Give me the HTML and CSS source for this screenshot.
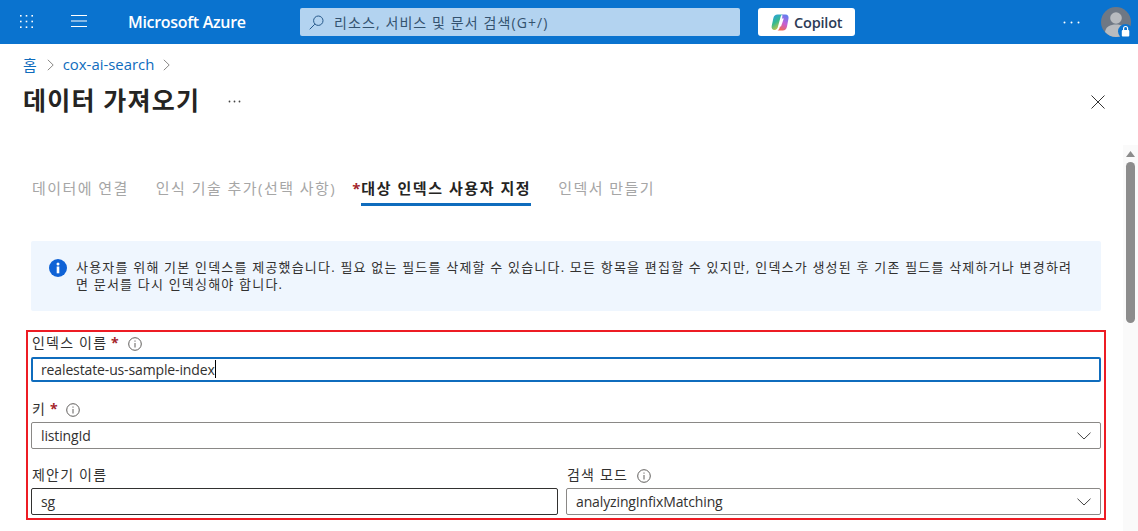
FILE: index.html
```html
<!DOCTYPE html>
<html lang="ko">
<head>
<meta charset="utf-8">
<title>데이터 가져오기</title>
<link rel="stylesheet" href="styles.css">
</head>
<body>
<header class="topbar">
  <button class="top-icon waffle" aria-label="앱">
    <svg width="13" height="13" viewBox="0 0 13 13" fill="#fff"><rect x="0" y="0" width="1.600" height="1.600"/><rect x="5.700" y="0" width="1.600" height="1.600"/><rect x="11.400" y="0" width="1.600" height="1.600"/><rect x="0" y="5.700" width="1.600" height="1.600"/><rect x="5.700" y="5.700" width="1.600" height="1.600"/><rect x="11.400" y="5.700" width="1.600" height="1.600"/><rect x="0" y="11.400" width="1.600" height="1.600"/><rect x="5.700" y="11.400" width="1.600" height="1.600"/><rect x="11.400" y="11.400" width="1.600" height="1.600"/></svg>
  </button>
  <button class="top-icon burger" aria-label="메뉴">
    <svg width="16" height="12" viewBox="0 0 16 12" stroke="#fff" fill="none"><path d="M0 .5h16M0 6h16M0 11.500h16"/></svg>
  </button>
  <div class="brand">Microsoft Azure</div>
  <div class="search">
    <svg width="15" height="15" viewBox="0 0 15 15" fill="none" stroke="#27598a"><circle cx="9.300" cy="5.700" r="4.700"/><path d="M5.800 9.200L.7 14.300"/></svg>
    <span>리소스, 서비스 및 문서 검색(G+/)</span>
  </div>
  <button class="copilot">
    <svg width="18" height="17" viewBox="0 0 18 17">
      <defs>
        <linearGradient id="cpa" x1="0.100" y1="0" x2="0.600" y2="1"><stop offset="0" stop-color="#2a9fe6"/><stop offset=".5" stop-color="#35b98f"/><stop offset="1" stop-color="#e0c83c"/></linearGradient>
        <linearGradient id="cpb" x1="0.700" y1="0" x2="0.300" y2="1"><stop offset="0" stop-color="#5f7ef0"/><stop offset=".5" stop-color="#c45fd6"/><stop offset="1" stop-color="#f4674f"/></linearGradient>
      </defs>
      <path d="M6.500.5h5.500c-1.300.3-2 1.200-2.400 2.500L7 12.500c-.4 2-1.700 3.500-3.500 3.500C1.300 16 .2 14.300.7 12L2.400 4C2.900 1.800 4.300.5 6.500.5z" fill="url(#cpa)"/>
      <path d="M11 .5h3.500c2.300 0 3.500 1.800 3 4L16 12.500c-.5 2.500-2 4-4.200 4H6.200c1.300-.4 2-1.400 2.400-2.800L11 4.500c.3-1.600.7-3.200 0-4z" fill="url(#cpb)"/>
      <path d="M10.600 4.500h2.200L10 12.500H7.800z" fill="#fff"/>
    </svg>
    <span>Copilot</span>
  </button>
  <button class="more-top" aria-label="더 보기">
    <svg width="17" height="3" viewBox="0 0 17 3" fill="#fff"><circle cx="1.500" cy="1.500" r="1"/><circle cx="8.500" cy="1.500" r="1"/><circle cx="15.500" cy="1.500" r="1"/></svg>
  </button>
  <div class="avatar">
    <svg width="30" height="30" viewBox="0 0 30 30">
      <circle cx="15" cy="15" r="15" fill="#6f7884"/>
      <circle cx="15" cy="11" r="5.800" fill="#b8bbbf"/>
      <path d="M4 25c1-5.500 5-7.500 11-7.500S25 19.500 26 25c-2.800 3-6.500 5-11 5S6.800 28 4 25z" fill="#b8bbbf"/>
      <circle cx="24.500" cy="24.500" r="7.500" fill="#0a73cf"/>
      <rect x="20.800" y="23" width="7.500" height="6.500" rx="1" fill="#fff"/>
      <path d="M22.600 23v-1.500a2 2 0 0 1 4 0V23" fill="none" stroke="#fff" stroke-width="1.200"/>
    </svg>
  </div>
</header>

<nav class="breadcrumb">
  <a class="crumb-home">홈</a>
  <svg class="crumb-sep" width="7" height="12" viewBox="0 0 7 12" fill="none" stroke="#8a8886"><path d="M.8.8L6.200 6 .8 11.200"/></svg>
  <a>cox-ai-search</a>
  <svg class="crumb-sep" width="7" height="12" viewBox="0 0 7 12" fill="none" stroke="#8a8886"><path d="M.8.8L6.200 6 .8 11.200"/></svg>
</nav>

<div class="title-row">
  <h1>데이터 가져오기</h1>
  <svg class="title-more" width="13" height="3" viewBox="0 0 13 3" fill="#444"><circle cx="1.500" cy="1.500" r=".9"/><circle cx="6.500" cy="1.500" r=".9"/><circle cx="11.500" cy="1.500" r=".9"/></svg>
  <svg class="close" width="14" height="14" viewBox="0 0 14 14" fill="none" stroke="#333"><path d="M.5.5l13 13M13.500.5l-13 13"/></svg>
</div>

<main class="content">
  <div class="scroll-area">
    <div class="tabs">
      <span class="tab">데이터에 연결</span>
      <span class="tab">인식 기술 추가(선택 사항)</span>
      <span class="tab active"><i class="tab-star">*</i><b>대상 인덱스 사용자 지정</b></span>
      <span class="tab">인덱서 만들기</span>
    </div>

    <div class="notice">
      <svg class="notice-icon" width="18" height="18" viewBox="0 0 18 18"><circle cx="9" cy="9" r="9" fill="#0f62d6"/><rect x="7.700" y="7.500" width="2.600" height="6.800" fill="#fff"/><circle cx="9" cy="4.900" r="1.500" fill="#fff"/></svg>
      <p>사용자를 위해 기본 인덱스를 제공했습니다. 필요 없는 필드를 삭제할 수 있습니다. 모든 항목을 편집할 수 있지만, 인덱스가 생성된 후 기존 필드를 삭제하거나 변경하려면 문서를 다시 인덱싱해야 합니다.</p>
    </div>

    <section class="form-box">
      <div class="field first">
        <label>인덱스 이름 <em>*</em>
          <svg class="info" width="14" height="14" viewBox="0 0 14 14" fill="none" stroke="#605e5c"><circle cx="7" cy="7" r="6.300"/><path d="M7 6v4.500M7 3.500v1.200"/></svg>
        </label>
        <div class="input focused"><span>realestate-us-sample-index</span><i class="caret"></i></div>
      </div>
      <div class="field">
        <label>키 <em>*</em>
          <svg class="info" width="14" height="14" viewBox="0 0 14 14" fill="none" stroke="#605e5c"><circle cx="7" cy="7" r="6.300"/><path d="M7 6v4.500M7 3.500v1.200"/></svg>
        </label>
        <div class="input select"><span>listingId</span>
          <svg width="14" height="8" viewBox="0 0 14 8" fill="none" stroke="#444"><path d="M.5.7L7 7 13.500.7"/></svg>
        </div>
      </div>
      <div class="field-row">
        <div class="field">
          <label>제안기 이름</label>
          <div class="input dark"><span>sg</span></div>
        </div>
        <div class="field">
          <label>검색 모드
            <svg class="info" width="14" height="14" viewBox="0 0 14 14" fill="none" stroke="#605e5c"><circle cx="7" cy="7" r="6.300"/><path d="M7 6v4.500M7 3.500v1.200"/></svg>
          </label>
          <div class="input select"><span>analyzingInfixMatching</span>
            <svg width="14" height="8" viewBox="0 0 14 8" fill="none" stroke="#444"><path d="M.5.7L7 7 13.500.7"/></svg>
          </div>
        </div>
      </div>
    </section>
  </div>
  <div class="scrollbar">
    <svg class="scroll-up" width="9" height="6" viewBox="0 0 9 6" fill="#8c8c8c"><path d="M4.500 0L9 6H0z"/></svg>
    <div class="scroll-thumb"></div>
  </div>
</main>
</body>
</html>
```

FILE: styles.css
```css
* { box-sizing: border-box; }
html, body { margin: 0; padding: 0; height: 531px; overflow: hidden; }
body {
  font-family: "Open Sans", "Noto Sans CJK KR", sans-serif;
  font-size: 14px;
  color: #323130;
  background: #fff;
}
button { border: 0; background: none; padding: 0; font: inherit; display: flex; align-items: center; }

.topbar {
  height: 44px;
  background: #0a73cf;
  display: flex;
  align-items: center;
}
.top-icon { margin-bottom: 2px; }
.waffle { margin-left: 20px; }
.burger { margin-left: 38px; }
.brand {
  margin-left: 41px;
  width: 172px;
  color: #fff;
  font-size: 16px;
  font-weight: 600;
  letter-spacing: -0.300px;
  white-space: nowrap;
}
.search {
  width: 440px;
  height: 28px;
  background: #b3d3f0;
  border-radius: 2px;
  display: flex;
  align-items: center;
  padding-left: 9px;
  color: #33526f;
  font-size: 14px;
  letter-spacing: 1.100px;
  gap: 10px;
}
.copilot {
  margin-left: 18px;
  width: 97px;
  height: 28px;
  background: #fff;
  border-radius: 3px;
  padding-left: 13px;
  gap: 5px;
  color: #2c3a55;
  font-size: 14.500px;
  font-weight: 600;
  letter-spacing: -0.200px;
}
.more-top { margin-left: 208px; }
.avatar { margin-left: 21px; width: 30px; height: 30px; }

.breadcrumb {
  height: 40px;
  padding: 0 0 0 23px;
  display: flex;
  align-items: center;
  gap: 9px;
  font-size: 14.900px;
  color: #0f6cbd;
}
.crumb-home { margin-right: 1px; }
.crumb-sep { margin-top: 1px; }

.title-row {
  height: 32px;
  display: flex;
  align-items: center;
  padding: 0 33px 0 23px;
}
h1 {
  margin: 0;
  font-size: 25px;
  line-height: 32px;
  font-weight: 700;
  color: #252423;
  letter-spacing: 1.200px;
}
.title-more { margin-left: 28px; margin-top: 3px; }
.close { margin-left: auto; margin-top: 3px; }

.content { display: flex; height: 415px; }
.scroll-area { flex: 1; padding-left: 31px; padding-right: 22px; min-width: 0; }
.scrollbar {
  width: 15px;
  margin-top: 29px;
  background: #fafafa;
  display: flex;
  flex-direction: column;
  align-items: center;
  padding-top: 6px;
}
.scroll-thumb { width: 9px; height: 161px; margin-top: 5px; border-radius: 5px; background: #8c8c8c; }

.tabs { display: flex; gap: 27px; padding: 59px 0 0 1px; height: 125px; }
.tab { color: #a6a6a6; height: 31px; line-height: 26px; font-size: 15px; letter-spacing: 1.450px; white-space: nowrap; }
.tab.active { margin-left: -11px; color: #252423; letter-spacing: 1.550px; }
.tab.active b { display: inline-block; height: 31px; border-bottom: 3px solid #0f6cbd; font-weight: 700; }
.tab-star { font-style: normal; color: #a4262c; font-weight: 700; margin-right: 1px; letter-spacing: 0; }

.notice {
  height: 70px;
  background: #eff6fe;
  border-radius: 2px;
  display: flex;
  align-items: flex-start;
  padding: 18px 24px 0 18px;
  gap: 9px;
}
.notice-icon { flex: none; }
.notice p { margin: 0; font-size: 13px; line-height: 17px; letter-spacing: 1.200px; color: #323130; }

.form-box {
  margin: 19px -5px 0 -5px;
  height: 190px;
  border: 2px solid #ed1c24;
  padding: 0 3px;
}
.field label { display: block; height: 24px; line-height: 21px; padding-left: 1px; font-size: 14px; letter-spacing: 1.200px; color: #323130; }
.field.first label { height: 25px; }
.field label em { font-style: normal; font-weight: 700; color: #a4262c; margin-left: -1px; letter-spacing: 0; }
.info { margin-left: 4px; vertical-align: -3px; }
.field + .field { margin-top: 16px; }
.input {
  height: 27px;
  border: 1px solid #8a8886;
  border-radius: 2px;
  display: flex;
  align-items: center;
  padding: 0 9px;
  font-size: 14px;
  letter-spacing: -0.130px;
  color: #323130;
}
.input.focused { height: 25px; border: 2px solid #0f6cbd; padding: 0 0 1px 8px; }
.input.dark { border-color: #323130; }
.input.select { justify-content: space-between; }
.caret { display: block; width: 1px; height: 18px; background: #000; }
.field-row { display: grid; grid-template-columns: 527px 535px; gap: 8px; margin-top: 15px; }
.field-row .field + .field { margin-top: 0; }
```
